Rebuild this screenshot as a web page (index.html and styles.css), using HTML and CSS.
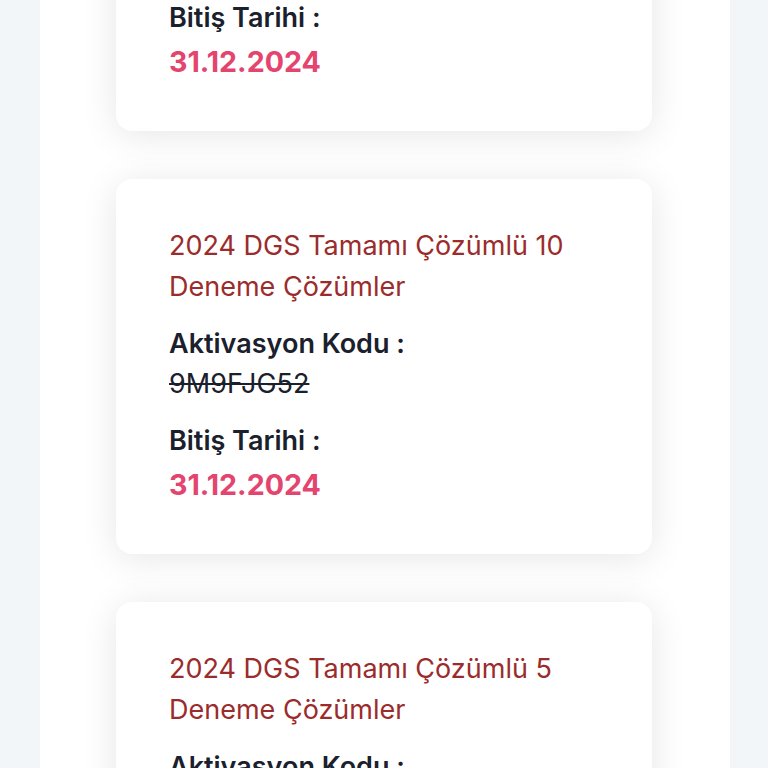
FILE: index.html
```html
<!DOCTYPE html>
<html lang="tr">
<head>
    <meta charset="UTF-8">
    <meta name="viewport" content="width=device-width, initial-scale=1.0">
    <title>Aktivasyon Kodlarım</title>
    <link rel="stylesheet" href="styles.css">
</head>
<body>
    <div class="page">
        <div class="code-list">
            <div class="code-card">
                <div class="card-title">2024 DGS Tamamı Çözümlü 15 Deneme Çözümler</div>
                <div class="card-label">Aktivasyon Kodu :</div>
                <div class="card-code used">7K2PXR41</div>
                <div class="card-label">Bitiş Tarihi :</div>
                <div class="card-date">31.12.2024</div>
            </div>

            <div class="code-card">
                <div class="card-title">2024 DGS Tamamı Çözümlü 10 Deneme Çözümler</div>
                <div class="card-label">Aktivasyon Kodu :</div>
                <div class="card-code used">9M9FJG52</div>
                <div class="card-label">Bitiş Tarihi :</div>
                <div class="card-date">31.12.2024</div>
            </div>

            <div class="code-card">
                <div class="card-title">2024 DGS Tamamı Çözümlü 5 Deneme Çözümler</div>
                <div class="card-label">Aktivasyon Kodu :</div>
                <div class="card-code used">3HT8LQ07</div>
                <div class="card-label">Bitiş Tarihi :</div>
                <div class="card-date">31.12.2024</div>
            </div>
        </div>
    </div>
</body>
</html>
```

FILE: styles.css
```css
html, body {
    margin: 0;
    padding: 0;
}
body {
    font-family: Inter, "Noto Sans", sans-serif;
    background-color: #f3f6f9;
    overflow: hidden;
}
.page {
    width: 690px;
    margin-left: 40px;
    min-height: 100vh;
    background: #ffffff;
}
.code-list {
    display: flex;
    flex-direction: column;
    align-items: flex-start;
    gap: 48px;
    margin-top: -244px;
    padding: 0 0 48px 76px;
}
.code-card {
    width: 536px;
    box-sizing: border-box;
    padding: 46px 52px 46px 53px;
    background: #ffffff;
    border-radius: 16px;
    box-shadow: 0 4px 36px rgba(0, 0, 0, 0.1);
}
.card-title {
    font-size: 27px;
    line-height: 41px;
    color: #9b2c2c;
}
.card-label {
    margin-top: 17px;
    font-size: 27px;
    line-height: 40px;
    font-weight: 600;
    color: #1a202c;
}
.card-code {
    font-size: 27px;
    line-height: 40px;
    color: #1a202c;
}
.card-code.used {
    text-decoration: line-through;
}
.card-date {
    font-size: 28.6px;
    line-height: 47px;
    font-weight: 700;
    color: #e3456f;
}
```
